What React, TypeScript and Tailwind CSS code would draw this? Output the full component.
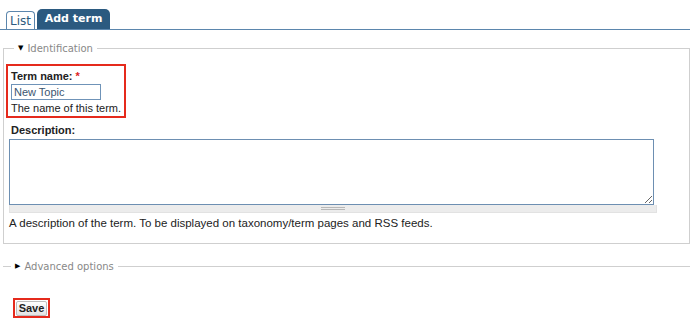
import React from 'react';

// Drupal-style "Add term" form with highlighted fields
export default function App() {
  return (
    <div className="relative w-[700px] h-[329px] overflow-hidden bg-white text-[#222] font-['Liberation_Sans',Arial,sans-serif]">
      {/* Tabs */}
      <div className="w-[690px] h-[30px] flex items-end gap-[2px] pl-[6px] border-b border-[#5b86ad]">
        <div className="h-[18px] w-[29px] flex items-center justify-center rounded-t-[4px] border border-b-0 border-[#5b86ad] bg-white text-[12px] text-[#2e5b80] font-['DejaVu_Sans',Verdana,sans-serif]">
          List
        </div>
        <div className="h-[20px] w-[73px] flex items-center justify-center rounded-t-[5px] bg-[#2b5a80] text-[11px] font-bold text-white font-['DejaVu_Sans',Verdana,sans-serif]">
          Add term
        </div>
      </div>

      {/* Identification fieldset */}
      <fieldset className="mt-[11px] ml-[3px] w-[687px] h-[203px] border border-[#cfcfcf] px-[2px] pt-[8px]">
        <legend className="ml-[8px] px-[4px] flex items-center gap-[4px] text-[10px] text-[#888] font-['DejaVu_Sans',Verdana,sans-serif]">
          <span className="text-[7px] text-black">▼</span>
          Identification
        </legend>

        <div className="w-[120px] h-[54px] border-2 border-[#e52a1c] pl-[3px] pt-[3px]">
          <div className="text-[11px] font-bold leading-[14px]">
            Term name: <span className="text-[#d22]">*</span>
          </div>
          <div className="mt-[1px] w-[90px] h-[16px] border border-[#6f93b8] px-[2px] text-[11px] leading-[14px] text-[#3a5570]">
            New Topic
          </div>
          <div className="mt-[1px] text-[11px] leading-[14px]">The name of this term.</div>
        </div>

        <div className="mt-[5px] pl-[5px] text-[11px] font-bold leading-[14px]">Description:</div>
        <div className="mt-[2px] ml-[3px] w-[648px]">
          <textarea
            className="block w-[645px] h-[66px] border border-[#6d8fb2] resize-y outline-none"
            defaultValue=""
          />
          <div className="h-[8px] w-[648px] bg-[#ececec] border border-t-0 border-[#e2e2e2] flex items-center justify-center">
            <div className="w-[24px] h-[3px] border-y border-[#b8b8b8]" />
          </div>
        </div>
        <div className="mt-[3px] pl-[3px] text-[11.5px] leading-[14px]">
          A description of the term. To be displayed on taxonomy/term pages and RSS feeds.
        </div>
      </fieldset>

      {/* Advanced options (collapsed) */}
      <fieldset className="mt-[15px] ml-[3px] w-[687px] border-t border-[#cfcfcf]">
        <legend className="ml-[8px] px-[4px] flex items-center gap-[4px] text-[10px] text-[#888] font-['DejaVu_Sans',Verdana,sans-serif]">
          <span className="text-[7px] text-black">▶</span>
          Advanced options
        </legend>
      </fieldset>

      {/* Save */}
      <div className="mt-[24px] ml-[13px] w-[37px] h-[20px] border-2 border-[#e52a1c] flex items-center justify-center">
        <button className="h-[15px] w-[31px] rounded-[2px] border border-[#bdbdbd] bg-gradient-to-b from-white to-[#e3e3e3] text-[11px] font-bold leading-none text-[#222]">
          Save
        </button>
      </div>
    </div>
  );
}
